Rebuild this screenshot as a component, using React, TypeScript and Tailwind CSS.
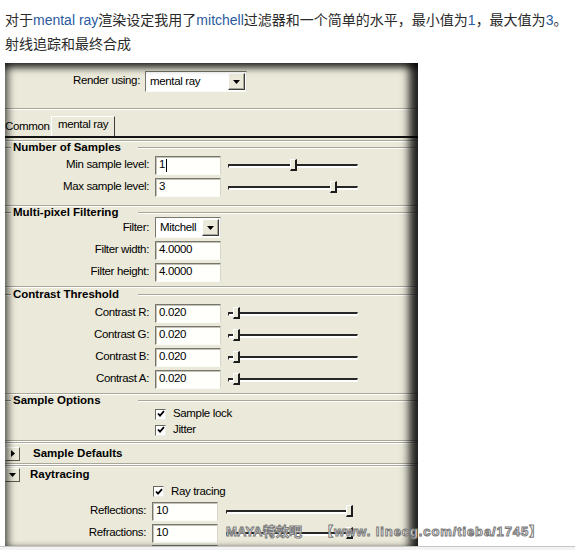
import React from "react";

const ui = "[font-family:'Liberation_Sans',sans-serif] text-[11.5px] tracking-[-0.35px] leading-none text-black";
const bold = "[font-family:'Liberation_Sans',sans-serif] font-bold text-[11.5px] tracking-normal leading-none text-black";

const Sep = () => <div className="h-[2px] border-t border-[#a9a797] border-b border-b-white" />;

const Field = ({ value, caret = false }: { value: string; caret?: boolean }) => (
  <div className="flex h-[19px] w-[66px] items-center border border-t-[#77766c] border-l-[#77766c] border-r-[#d8d6ca] border-b-[#fbfbf5] bg-[#fffffb] pl-[3px] shadow-[inset_1px_1px_0_#c4c2b6]">
    {value}
    {caret && <span className="ml-px h-[13px] w-px bg-black" />}
  </div>
);

const Slider = ({ thumb, w = "w-[130px]" }: { thumb: number; w?: string }) => (
  <div className={`relative h-[19px] ${w}`}>
    <div className="absolute left-0 right-0 top-[8px] h-[4px] border-t-2 border-l border-[#262626] border-r border-r-[#f4f4f0] border-b border-b-white bg-white" />
    <div
      className="absolute top-[3px] h-[12px] w-[7px] border-l border-t border-l-white border-t-white border-r-2 border-b-2 border-r-[#1c1c1c] border-b-[#1c1c1c] bg-[#ebe9d9]"
      style={{ left: thumb }}
    />
  </div>
);

const Arrow = () => (
  <div className="flex h-[17px] w-[17px] items-center justify-center border border-t-white border-l-white border-r-[#3a3a3a] border-b-[#3a3a3a] bg-[#ebe9d9] shadow-[inset_-1px_-1px_0_#a9a797]">
    <svg width="7" height="4" viewBox="0 0 7 4">
      <polygon points="0,0 7,0 3.5,4" fill="#000" />
    </svg>
  </div>
);

const Dropdown = ({ value, w }: { value: string; w: string }) => (
  <div className={`flex h-[21px] ${w} items-center border border-t-[#77766c] border-l-[#77766c] border-r-[#e4e2d8] border-b-[#fbfbf5] bg-white pr-px`}>
    <span className="flex-1 pl-[4px]">{value}</span>
    <Arrow />
  </div>
);

const Check = ({ label }: { label: string }) => (
  <div className="flex items-center gap-[7px]">
    <div className="flex h-[11px] w-[11px] items-center justify-center border border-t-[#6a6a62] border-l-[#6a6a62] border-r-[#eeeeea] border-b-[#eeeeea] bg-white">
      <svg width="8" height="8" viewBox="0 0 8 8">
        <path d="M1 3.5 L3 5.6 L7 1.2" stroke="#000" strokeWidth="1.8" fill="none" />
      </svg>
    </div>
    <span>{label}</span>
  </div>
);

const GroupHeader = ({ title, h }: { title: string; h: string }) => (
  <div className={`grid grid-cols-[133px_1fr] items-center ${h}`}>
    <div className="flex items-center gap-[2px]">
      <div className="h-[2px] w-[6px] border-t border-[#8f8d80] border-b border-b-white" />
      <span className={bold}>{title}</span>
    </div>
    <div className="h-[2px] border-t border-[#a9a797] border-b border-b-white" />
  </div>
);

const Row = ({ label, children }: { label: string; children: React.ReactNode }) => (
  <div className="flex h-[22px] items-center">
    <div className="w-[144px] text-right">{label}</div>
    <div className="ml-[6px]">{children}</div>
  </div>
);

const SliderRow = ({ label, value, thumb, caret }: { label: string; value: string; thumb: number; caret?: boolean }) => (
  <div className="flex h-[22px] items-center">
    <div className="w-[144px] text-right">{label}</div>
    <div className="ml-[6px]">
      <Field value={value} caret={caret} />
    </div>
    <div className="ml-[7px]">
      <Slider thumb={thumb} />
    </div>
  </div>
);

const RayRow = ({ label, value, thumb }: { label: string; value: string; thumb: number }) => (
  <div className="flex h-[22px] items-center">
    <div className="w-[141px] text-right">{label}</div>
    <div className="ml-[6px]">
      <Field value={value} />
    </div>
    <div className="ml-[8px]">
      <Slider thumb={thumb} w="w-[127px]" />
    </div>
  </div>
);

const Toggle = ({ open }: { open: boolean }) => (
  <div className="flex h-[14px] w-[15px] items-center justify-center border border-t-white border-l-white border-r-[#5a5a52] border-b-[#5a5a52] bg-[#ebe9d9]">
    {open ? (
      <svg width="7" height="4" viewBox="0 0 7 4">
        <polygon points="0,0 7,0 3.5,4" fill="#000" />
      </svg>
    ) : (
      <svg width="4" height="7" viewBox="0 0 4 7">
        <polygon points="0,0 4,3.5 0,7" fill="#000" />
      </svg>
    )}
  </div>
);

const Blue = ({ children }: { children: React.ReactNode }) => <span className="text-[#2b5a9e]">{children}</span>;

export default function App() {
  return (
    <div className="relative h-[550px] w-[575px] overflow-hidden bg-white">
      <div className="whitespace-nowrap pl-[5px] pt-[8px] text-[14px] leading-6 text-[#2a2a2a] [font-family:'Liberation_Sans','Noto_Sans_CJK_SC',sans-serif]">
        <p>
          对于<Blue>mental ray</Blue>渲染设定我用了<Blue>mitchell</Blue>过滤器和一个简单的水平，最小值为<Blue>1</Blue>，最大值为<Blue>3</Blue>。
        </p>
        <p>射线追踪和最终合成</p>
      </div>

      <div className={`relative ml-[5px] mt-[7px] h-[483px] w-[413px] overflow-hidden bg-[#ebe9d9] ${ui}`}>
        {/* render using */}
        <div className="flex h-[29px] items-end">
          <div className="w-[140px] pb-[6px] pr-[5px] text-right">Render using:</div>
          <Dropdown value="mental ray" w="w-[102px]" />
        </div>
        <div className="h-[16px]" />
        <Sep />

        {/* tabs */}
        <div className="flex h-[26px] items-end">
          <div className="flex h-[18px] w-[46px] items-center">Common</div>
          <div className="flex h-[20px] items-center border-l border-t border-white border-r border-r-[#3c3c3c] px-[6px] pb-[4px]">mental ray</div>
        </div>
        <div className="h-[2px] bg-[#141414]" />
        <div className="h-[2px]" />
        <Sep />

        {/* Number of Samples */}
        <GroupHeader title="Number of Samples" h="h-[12px]" />
        <SliderRow label="Min sample level:" value="1" thumb={62} caret />
        <SliderRow label="Max sample level:" value="3" thumb={102} />
        <div className="h-[7px]" />
        <Sep />

        {/* Multi-pixel Filtering */}
        <GroupHeader title="Multi-pixel Filtering" h="h-[9px]" />
        <div className="flex h-[23px] items-center">
          <div className="w-[144px] text-right">Filter:</div>
          <div className="ml-[6px]">
            <Dropdown value="Mitchell" w="w-[66px]" />
          </div>
        </div>
        <Row label="Filter width:">
          <Field value="4.0000" />
        </Row>
        <Row label="Filter height:">
          <Field value="4.0000" />
        </Row>
        <div className="h-[3px]" />
        <Sep />

        {/* Contrast Threshold */}
        <GroupHeader title="Contrast Threshold" h="h-[14px]" />
        <SliderRow label="Contrast R:" value="0.020" thumb={5} />
        <SliderRow label="Contrast G:" value="0.020" thumb={5} />
        <SliderRow label="Contrast B:" value="0.020" thumb={5} />
        <SliderRow label="Contrast A:" value="0.020" thumb={5} />
        <div className="h-[3px]" />
        <Sep />

        {/* Sample Options */}
        <GroupHeader title="Sample Options" h="h-[11px]" />
        <div className="flex h-[16px] items-center pl-[150px]">
          <Check label="Sample lock" />
        </div>
        <div className="flex h-[16px] items-center pl-[150px]">
          <Check label="Jitter" />
        </div>
        <div className="h-[2px]" />
        <Sep />
        <Sep />

        {/* Sample Defaults */}
        <div className="flex h-[19px] items-center">
          <Toggle open={false} />
          <span className={`ml-[13px] ${bold}`}>Sample Defaults</span>
        </div>
        <Sep />
        <Sep />

        {/* Raytracing */}
        <div className="flex h-[16px] items-center">
          <Toggle open />
          <span className={`ml-[10px] ${bold}`}>Raytracing</span>
        </div>
        <div className="flex h-[17px] items-center pl-[148px]">
          <Check label="Ray tracing" />
        </div>
        <RayRow label="Reflections:" value="10" thumb={120} />
        <RayRow label="Refractions:" value="10" thumb={120} />
        {/* next row, only its field's top edge shows */}
        <div className="flex h-[22px] items-start pl-[147px] pt-px">
          <div className="h-[19px] w-[66px] border border-t-[#77766c] border-l-[#77766c] border-r-[#d8d6ca] bg-[#fffffb]" />
        </div>

        {/* vignette of the photographed window */}
        <div className="pointer-events-none absolute inset-0 shadow-[inset_7px_0_7px_-3px_rgba(0,0,0,0.55),inset_-13px_0_9px_-4px_rgba(0,0,0,0.85),inset_0_9px_7px_-4px_rgba(0,0,0,0.75)]" />
      </div>
      <div className="h-[10px] border-t border-[#c6c6c6] bg-[#f3f3f3]" />

      {/* watermark */}
      <div className="pointer-events-none absolute left-[226px] top-[524px] whitespace-nowrap text-[13px] font-bold leading-4 text-white [-webkit-text-stroke:1px_#7a7a7a] [font-family:'Liberation_Sans','Noto_Sans_CJK_SC',sans-serif]">
        <span className="tracking-[0.2px]">MAYA特效吧</span>
        <span className="ml-[18px] tracking-[0.9px]">【www. linecg.com/tieba/1745】</span>
      </div>
    </div>
  );
}
